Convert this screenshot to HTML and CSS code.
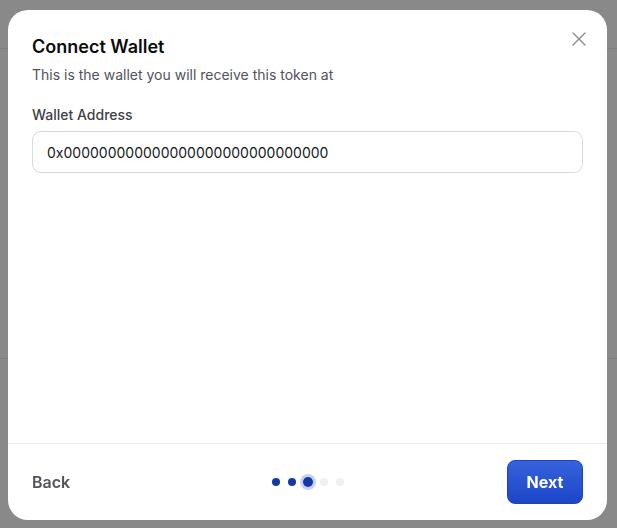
FILE: index.html
```html
<!DOCTYPE html>
<html lang="en">
<head>
    <meta charset="UTF-8">
    <meta name="viewport" content="width=device-width, initial-scale=1.0">
    <title>Connect Wallet</title>
    <link rel="stylesheet" href="styles.css">
</head>
<body>
    <div class="page">
        <div class="page-header"></div>
        <div class="page-section"></div>
    </div>

    <div class="overlay">
        <div class="modal" role="dialog" aria-labelledby="modalTitle">
            <button class="close" aria-label="Close">
                <svg width="14" height="14" viewBox="0 0 14 14" fill="none" stroke="currentColor" stroke-width="1.4" stroke-linecap="round">
                    <path d="M1 1L13 13M13 1L1 13"/>
                </svg>
            </button>

            <div class="modal-body">
                <h2 id="modalTitle">Connect Wallet</h2>
                <p class="subtitle">This is the wallet you will receive this token at</p>

                <div class="form-group">
                    <label for="walletAddress">Wallet Address</label>
                    <input type="text" id="walletAddress" value="0x000000000000000000000000000000">
                </div>
            </div>

            <div class="modal-footer">
                <button class="back">Back</button>
                <div class="steps">
                    <span class="dot"></span>
                    <span class="dot"></span>
                    <span class="dot active"></span>
                    <span class="dot todo"></span>
                    <span class="dot todo"></span>
                </div>
                <button class="next">Next</button>
            </div>
        </div>
    </div>
</body>
</html>
```

FILE: styles.css
```css
* {
    box-sizing: border-box;
}

body {
    margin: 0;
    font-family: Inter, "Noto Sans", sans-serif;
    background-color: #898989;
    width: 617px;
    height: 528px;
    overflow: hidden;
}

.page-header {
    height: 49px;
    border-bottom: 1px solid #7e7e7e;
}

.page-section {
    height: 310px;
    border-bottom: 1px solid #7e7e7e;
}

.overlay {
    position: fixed;
    inset: 0;
    padding: 10px 10px 8px 8px;
    display: flex;
}

.modal {
    position: relative;
    flex: 1;
    display: flex;
    flex-direction: column;
    background-color: #ffffff;
    border-radius: 20px;
}

.close {
    position: absolute;
    top: 14px;
    right: 13px;
    width: 30px;
    height: 30px;
    display: flex;
    align-items: center;
    justify-content: center;
    padding: 0;
    border: none;
    background: none;
    color: #8a8a8a;
    cursor: pointer;
}

.modal-body {
    flex: 1;
    padding: 25px 24px 0 24px;
}

h2 {
    margin: 0;
    font-size: 18px;
    line-height: 24px;
    font-weight: 600;
    color: #0b0b0c;
}

.subtitle {
    margin: 6px 0 0 0;
    font-size: 14px;
    line-height: 20px;
    color: #52525b;
}

.form-group {
    margin-top: 20px;
}

label {
    display: block;
    margin-bottom: 6px;
    font-size: 14px;
    line-height: 20px;
    font-weight: 500;
    color: #3f3f46;
}

input {
    width: 100%;
    height: 42px;
    padding: 0 14px;
    border: 1px solid #d9d9de;
    border-radius: 9px;
    font-family: inherit;
    font-size: 14px;
    color: #18181b;
    background-color: #ffffff;
}

input:focus {
    outline: none;
}

.modal-footer {
    display: grid;
    grid-template-columns: 1fr auto 1fr;
    align-items: center;
    padding: 16px 24px 16px 24px;
    border-top: 1px solid #ececef;
}

.back {
    justify-self: start;
    padding: 0;
    border: none;
    background: none;
    font-family: inherit;
    font-size: 16px;
    font-weight: 600;
    color: #52525b;
    cursor: pointer;
}

.steps {
    display: flex;
    align-items: center;
    gap: 8px;
}

.dot {
    width: 8px;
    height: 8px;
    border-radius: 50%;
    background-color: #1538a6;
}

.dot.active {
    width: 10px;
    height: 10px;
    margin: 0 -1px;
    box-shadow: 0 0 0 3px #c9d2fb;
}

.dot.todo {
    background-color: #eff0f3;
}

.next {
    justify-self: end;
    width: 76px;
    height: 44px;
    border: 1px solid #1e43bf;
    border-radius: 8px;
    background: linear-gradient(#3563db, #1d45c8);
    font-family: inherit;
    font-size: 16px;
    font-weight: 700;
    color: #ffffff;
    cursor: pointer;
}
```
